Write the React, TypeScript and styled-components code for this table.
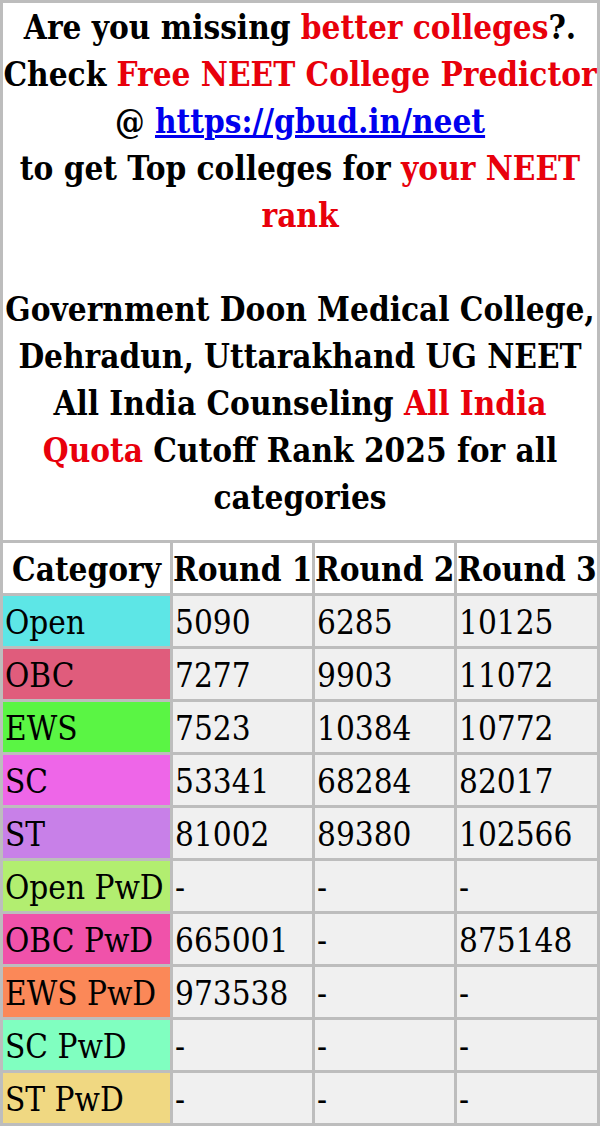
import React from "react";
import styled, { createGlobalStyle } from "styled-components";

const GlobalStyle = createGlobalStyle`
  html, body { margin: 0; padding: 0; background: #ffffff; }
  body { font-family: "DejaVu Serif Condensed", "DejaVu Serif", serif; color: #000; }
`;

const Table = styled.table`
  width: 600px;
  border-collapse: separate;
  border-spacing: 3px;
  background: #bdbdbd;
  table-layout: fixed;
`;

const IntroCell = styled.td`
  background: #ffffff;
  text-align: center;
  font-weight: bold;
  font-size: 33px;
  line-height: 47px;
  padding: 1px 0 19px;
`;

const Red = styled.span`
  color: #e8000b;
`;

const Link = styled.a`
  color: #0000ee;
  text-decoration: underline;
`;

const HeadCell = styled.th`
  background: #ffffff;
  font-size: 33px;
  font-weight: bold;
  text-align: center;
  height: 50px;
  line-height: 46px;
  padding: 4px 0 0;
  box-sizing: border-box;
  white-space: nowrap;
`;

const CatCell = styled.td<{ $bg: string }>`
  background: ${(p) => p.$bg};
  font-size: 33px;
  height: 50px;
  line-height: 46px;
  padding: 4px 0 0 2px;
  box-sizing: border-box;
  white-space: nowrap;
`;

const ValCell = styled.td`
  background: #f0f0f0;
  font-size: 33px;
  height: 50px;
  line-height: 46px;
  padding: 4px 0 0 2px;
  box-sizing: border-box;
  white-space: nowrap;
`;

const rows: { cat: string; bg: string; v: string[] }[] = [
  { cat: "Open", bg: "#5de6e6", v: ["5090", "6285", "10125"] },
  { cat: "OBC", bg: "#e05c7c", v: ["7277", "9903", "11072"] },
  { cat: "EWS", bg: "#5af544", v: ["7523", "10384", "10772"] },
  { cat: "SC", bg: "#ee66e8", v: ["53341", "68284", "82017"] },
  { cat: "ST", bg: "#c880e8", v: ["81002", "89380", "102566"] },
  { cat: "Open PwD", bg: "#b2ee70", v: ["-", "-", "-"] },
  { cat: "OBC PwD", bg: "#f052aa", v: ["665001", "-", "875148"] },
  { cat: "EWS PwD", bg: "#fb8858", v: ["973538", "-", "-"] },
  { cat: "SC PwD", bg: "#80ffc0", v: ["-", "-", "-"] },
  { cat: "ST PwD", bg: "#f0d882", v: ["-", "-", "-"] },
];

export default function App() {
  return (
    <>
      <GlobalStyle />
      <Table>
        <colgroup>
          <col style={{ width: "167px" }} />
          <col style={{ width: "139px" }} />
          <col style={{ width: "139px" }} />
          <col style={{ width: "140px" }} />
        </colgroup>
        <tbody>
          <tr>
            <IntroCell colSpan={4}>
              Are you missing <Red>better colleges</Red>?.
              <br />
              Check <Red>Free NEET College Predictor</Red>
              <br />@ <Link href="#">https://gbud.in/neet</Link>
              <br />
              to get Top colleges for <Red>your NEET rank</Red>
              <br />
              <br />
              Government Doon Medical College, Dehradun, Uttarakhand UG NEET All India Counseling{" "}
              <Red>All India Quota</Red> Cutoff Rank 2025 for all categories
            </IntroCell>
          </tr>
          <tr>
            <HeadCell>Category</HeadCell>
            <HeadCell>Round 1</HeadCell>
            <HeadCell>Round 2</HeadCell>
            <HeadCell>Round 3</HeadCell>
          </tr>
          {rows.map((r) => (
            <tr key={r.cat}>
              <CatCell $bg={r.bg}>{r.cat}</CatCell>
              {r.v.map((x, i) => (
                <ValCell key={i}>{x}</ValCell>
              ))}
            </tr>
          ))}
        </tbody>
      </Table>
    </>
  );
}
